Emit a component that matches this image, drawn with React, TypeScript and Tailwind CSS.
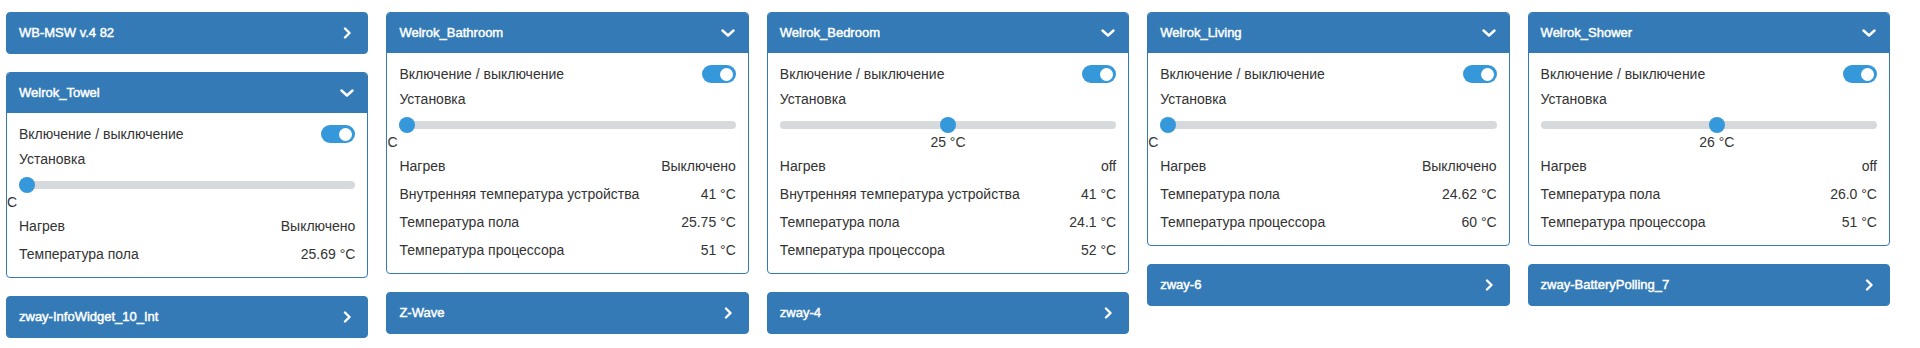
import React from "react";

type Row = { label: string; value: string };

type Thermostat = {
  title: string;
  setpoint: number | null;
  rows: Row[];
};

const FONT = "font-['Liberation_Sans',Arial,sans-serif]";
// heading text: regular width, thickened a little like the ClearType original
const HEAD = "text-[13px] font-normal [-webkit-text-stroke:0.45px_white]";

function ChevronRight() {
  return (
    <svg width="10" height="12" viewBox="0 0 10 12" className="shrink-0">
      <polyline
        points="3,1.5 7.5,6 3,10.5"
        fill="none"
        stroke="white"
        strokeWidth="2.4"
        strokeLinecap="round"
        strokeLinejoin="round"
      />
    </svg>
  );
}

function ChevronDown() {
  return (
    <svg width="14" height="8" viewBox="0 0 14 8" className="shrink-0">
      <polyline
        points="1.5,1.5 7,6.5 12.5,1.5"
        fill="none"
        stroke="white"
        strokeWidth="2.4"
        strokeLinecap="round"
        strokeLinejoin="round"
      />
    </svg>
  );
}

function Collapsed({ title }: { title: string }) {
  return (
    <div className="rounded-[4px] border border-[#337ab7] bg-[#337ab7] text-white">
      <div className={`flex h-[40px] items-center justify-between pl-[12px] pr-[15px] ${HEAD}`}>
        <span>{title}</span>
        <ChevronRight />
      </div>
    </div>
  );
}

function Toggle() {
  return (
    <div className="flex h-[18px] w-[34px] items-center justify-end rounded-full bg-[#3598db] pr-[3px]">
      <div className="h-[13px] w-[13px] rounded-full bg-white" />
    </div>
  );
}

function Slider({ value }: { value: number | null }) {
  const min = 5;
  const max = 45;
  const frac = value === null ? 0 : (value - min) / (max - min);
  return (
    <div className="relative mt-[6px] h-[35px]">
      <div className="absolute left-0 right-0 top-[4px] h-[8px] rounded-full bg-[#d6dadd]" />
      <div
        className="absolute top-0 h-[16px] w-[16px] rounded-full bg-[#3598db]"
        style={{ left: `calc((100% - 16px) * ${frac})` }}
      />
      {value === null ? (
        <span className="absolute left-[-12px] top-[16px] h-[19px] leading-[19px]">C</span>
      ) : (
        <span
          className="absolute top-[16px] h-[19px] -translate-x-1/2 whitespace-nowrap leading-[19px]"
          style={{ left: `calc((100% - 16px) * ${frac} + 8px)` }}
        >
          {value} °C
        </span>
      )}
    </div>
  );
}

function Panel({ item }: { item: Thermostat }) {
  return (
    <div className="overflow-hidden rounded-[4px] border border-[#337ab7] bg-white">
      <div className={`flex h-[40px] items-center justify-between bg-[#337ab7] pl-[12px] pr-[13px] text-white ${HEAD}`}>
        <span>{item.title}</span>
        <ChevronDown />
      </div>
      <div className="px-[12px] pb-[9px] pt-[8px] text-[14px] text-[#333]">
        <div className="flex h-[26px] items-center justify-between">
          <span>Включение / выключение</span>
          <Toggle />
        </div>
        <div className="flex h-[24px] items-center">Установка</div>
        <Slider value={item.setpoint} />
        {item.rows.map((r) => (
          <div key={r.label} className="flex h-[28px] items-center justify-between">
            <span>{r.label}</span>
            <span>{r.value}</span>
          </div>
        ))}
      </div>
    </div>
  );
}

const towel: Thermostat = {
  title: "Welrok_Towel",
  setpoint: null,
  rows: [
    { label: "Нагрев", value: "Выключено" },
    { label: "Температура пола", value: "25.69 °C" },
  ],
};

const bathroom: Thermostat = {
  title: "Welrok_Bathroom",
  setpoint: null,
  rows: [
    { label: "Нагрев", value: "Выключено" },
    { label: "Внутренняя температура устройства", value: "41 °C" },
    { label: "Температура пола", value: "25.75 °C" },
    { label: "Температура процессора", value: "51 °C" },
  ],
};

const bedroom: Thermostat = {
  title: "Welrok_Bedroom",
  setpoint: 25,
  rows: [
    { label: "Нагрев", value: "off" },
    { label: "Внутренняя температура устройства", value: "41 °C" },
    { label: "Температура пола", value: "24.1 °C" },
    { label: "Температура процессора", value: "52 °C" },
  ],
};

const living: Thermostat = {
  title: "Welrok_Living",
  setpoint: null,
  rows: [
    { label: "Нагрев", value: "Выключено" },
    { label: "Температура пола", value: "24.62 °C" },
    { label: "Температура процессора", value: "60 °C" },
  ],
};

const shower: Thermostat = {
  title: "Welrok_Shower",
  setpoint: 26,
  rows: [
    { label: "Нагрев", value: "off" },
    { label: "Температура пола", value: "26.0 °C" },
    { label: "Температура процессора", value: "51 °C" },
  ],
};

export default function App() {
  return (
    <div className={`${FONT} h-[348px] w-[1920px] bg-white pl-[6px] pt-[12px]`}>
      <div className="grid w-[1884px] grid-cols-5 items-start gap-x-[18px]">
        <div className="flex flex-col gap-[18px]">
          <Collapsed title="WB-MSW v.4 82" />
          <Panel item={towel} />
          <Collapsed title="zway-InfoWidget_10_Int" />
        </div>
        <div className="flex flex-col gap-[18px]">
          <Panel item={bathroom} />
          <Collapsed title="Z-Wave" />
        </div>
        <div className="flex flex-col gap-[18px]">
          <Panel item={bedroom} />
          <Collapsed title="zway-4" />
        </div>
        <div className="flex flex-col gap-[18px]">
          <Panel item={living} />
          <Collapsed title="zway-6" />
        </div>
        <div className="flex flex-col gap-[18px]">
          <Panel item={shower} />
          <Collapsed title="zway-BatteryPolling_7" />
        </div>
      </div>
    </div>
  );
}
